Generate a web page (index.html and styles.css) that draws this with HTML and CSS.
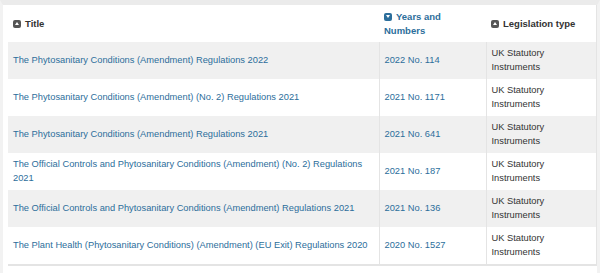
FILE: index.html
```html
<!DOCTYPE html>
<html>
<head>
<meta charset="utf-8">
<link rel="stylesheet" href="styles.css">
</head>
<body>
<div class="frame">
  <table class="results">
    <thead>
      <tr>
        <th class="c-title"><span class="sort up"></span>Title</th>
        <th class="c-year active"><span class="sort down"></span>Years and Numbers</th>
        <th class="c-type"><span class="sort up"></span>Legislation type</th>
      </tr>
    </thead>
    <tbody>
      <tr class="odd"><td><a>The Phytosanitary Conditions (Amendment) Regulations 2022</a></td><td><a>2022 No. 114</a></td><td>UK Statutory Instruments</td></tr>
      <tr><td><a>The Phytosanitary Conditions (Amendment) (No. 2) Regulations 2021</a></td><td><a>2021 No. 1171</a></td><td>UK Statutory Instruments</td></tr>
      <tr class="odd"><td><a>The Phytosanitary Conditions (Amendment) Regulations 2021</a></td><td><a>2021 No. 641</a></td><td>UK Statutory Instruments</td></tr>
      <tr><td><a>The Official Controls and Phytosanitary Conditions (Amendment) (No. 2) Regulations 2021</a></td><td><a>2021 No. 187</a></td><td>UK Statutory Instruments</td></tr>
      <tr class="odd"><td><a>The Official Controls and Phytosanitary Conditions (Amendment) Regulations 2021</a></td><td><a>2021 No. 136</a></td><td>UK Statutory Instruments</td></tr>
      <tr><td><a>The Plant Health (Phytosanitary Conditions) (Amendment) (EU Exit) Regulations 2020</a></td><td><a>2020 No. 1527</a></td><td>UK Statutory Instruments</td></tr>
    </tbody>
  </table>
</div>
</body>
</html>
```
FILE: styles.css
```css
html, body {
  margin: 0;
  padding: 0;
  background: #fff;
}
body {
  font-family: "Liberation Sans", Arial, sans-serif;
  font-size: 9.3px;
  line-height: 14px;
  color: #333;
}
.frame {
  border-top: 5px solid #ebebeb;
  border-left: 3px solid #f2f2f2;
  border-right: 3px solid #f2f2f2;
  padding: 0 1px 9px 5px;
}
.results {
  width: 588px;
  border-collapse: collapse;
  table-layout: fixed;
  border-bottom: 2px solid #e4e4e4;
  border-right: 1px solid #e4e4e4;
}
.results th {
  text-align: left;
  font-weight: bold;
  font-size: 9.5px;
  height: 37px;
  padding: 0 5px;
  vertical-align: middle;
  box-sizing: border-box;
}
.results th.c-year {
  padding-right: 20px;
}
.results td {
  height: 37px;
  padding: 4px 5px 5px;
  vertical-align: middle;
  box-sizing: border-box;
  border-left: 1px solid #e4e4e4;
}
.results td:first-child {
  border-left: none;
}
.c-title { width: 371px; }
.c-year { width: 107px; }
.c-type { width: 110px; }
.results tr.odd td {
  background: #f0f0f0;
}
.results a {
  color: #2c6e9b;
  text-decoration: none;
}
.active {
  color: #2c6e9b;
}
.sort {
  display: inline-block;
  width: 8px;
  height: 8px;
  border-radius: 2px;
  background: #555;
  margin-right: 4px;
  vertical-align: -1px;
  position: relative;
}
.active .sort {
  background: #2c6e9b;
}
.sort::after {
  content: "";
  position: absolute;
  left: 2px;
  width: 0;
  height: 0;
  border-left: 2px solid transparent;
  border-right: 2px solid transparent;
}
.sort.up::after {
  top: 2.5px;
  border-bottom: 3px solid #fff;
}
.sort.down::after {
  top: 2.5px;
  border-top: 3px solid #fff;
}
```
